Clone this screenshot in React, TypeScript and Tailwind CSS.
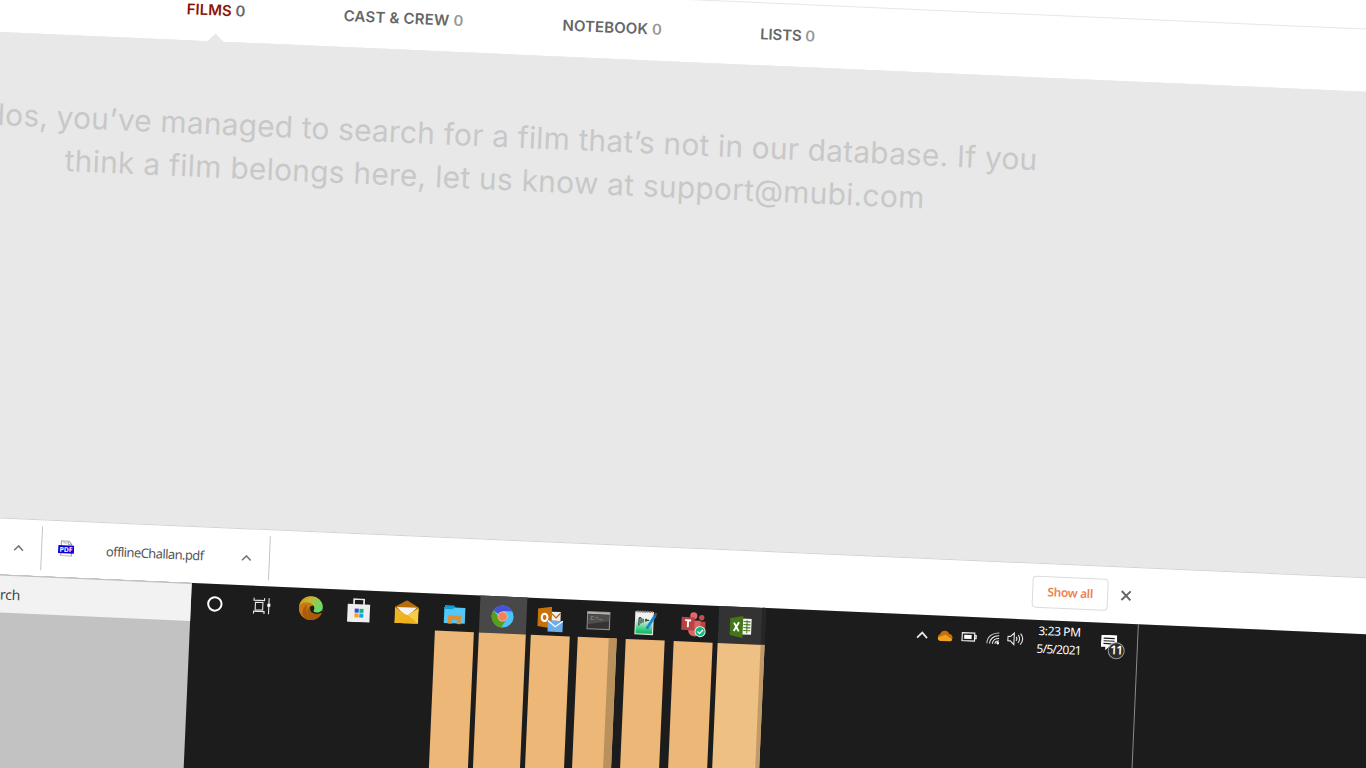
import React from "react";

const tabs = [
  { label: "FILMS", box: "w-[157px]", spacing: "tracking-[0px]", active: true },
  { label: "CAST & CREW", box: "w-[219px]", spacing: "tracking-[0.2px]", active: false },
  { label: "NOTEBOOK", box: "w-[198px]", spacing: "tracking-[0.1px]", active: false },
  { label: "LISTS", box: "w-[100px]", spacing: "tracking-[-0.15px]", active: false },
];

function Caret({ className, color }: { className: string; color: string }) {
  return (
    <svg viewBox="0 0 12 8" className={className} fill="none" stroke={color}>
      <path d="M1 7 6 1.8 11 7" strokeWidth="1.8" />
    </svg>
  );
}

const Cortana = () => (
  <svg viewBox="0 0 24 24" className="size-6" fill="none">
    <circle cx="12" cy="12" r="6.7" stroke="#fff" strokeWidth="2" />
  </svg>
);

const TaskView = () => (
  <svg viewBox="0 0 24 24" className="size-6" fill="none" stroke="#e8e8e8" strokeWidth="1.1">
    <path d="M3 4v2.500h10.500V4M4.500 8.500h7.500v7.500H4.500zM3 20v-2.500h10.500V20M18 4v16" />
    <path d="M16.500 9.500h3v3h-3z" fill="#fff" stroke="none" />
  </svg>
);

const Edge = () => (
  <svg viewBox="0 0 24 24" className="size-6">
    <defs>
      <linearGradient id="edgeTop" x1="0" y1="0" x2="1" y2="0.6">
        <stop offset="0" stopColor="#e08a1c" />
        <stop offset="0.45" stopColor="#b9bd35" />
        <stop offset="1" stopColor="#5ee070" />
      </linearGradient>
    </defs>
    <circle cx="12" cy="12" r="12" fill="#c97912" />
    <path d="M8.500 9C6 14 9 21 15 21c3 0 5-1 7.500-3-2.500 4-6 6-10.500 6C6 24 3 19 4 15c.5-3 2-5 4.500-6Z" fill="#a85c08" />
    <path d="M11.500 10.500c-2 2.500-1.500 5.500.5 7 3 2 7.500 1.500 11.500-1.500V12l-9-3Z" fill="#1c1c1c" />
    <path d="M15 21.500c-4.500 0-7.500-5-6-9l2.500-.5c-.8 4.500 4.500 7 11.500 4.500-2 3.500-4.500 5-8 5Z" fill="#a85c08" />
    <path d="M0.500 10C2 3 7 0 12 0c7 0 12 5 12 10.500 0 4-3 5.500-6 5.500-2.500 0-3.500-1-3-2 .8-1 .8-2.500 0-4C12 5 4 5 .5 10Z" fill="url(#edgeTop)" />
  </svg>
);

const Store = () => (
  <svg viewBox="0 0 24 24" className="size-6">
    <path d="M7 8V1h10v7" fill="none" stroke="#e9e9e9" strokeWidth="1.700" />
    <path d="M.8 6h22.400v18H.8z" fill="#eeeeee" />
    <path d="M8 10.500h4v4H8z" fill="#254fe2" />
    <path d="M12.800 10.500h4v4h-4z" fill="#12b77c" />
    <path d="M8 15.300h4v4H8z" fill="#f6a408" />
    <path d="M12.800 15.300h4v4h-4z" fill="#15a3ef" />
  </svg>
);

const Mail = () => (
  <svg viewBox="0 0 24 24" className="size-6">
    <path d="M0 7 12 0l12 7v5H0z" fill="#b96c0a" />
    <path d="M2 7h20l-9 9h-2z" fill="#f3f3f3" />
    <path d="M0 7.500 12 15v8H0z" fill="#efb526" />
    <path d="M24 7.500V23H0z" fill="#f8cc45" />
    <path d="M0 23 10.500 14l3 .8L24 23z" fill="#eeb221" />
  </svg>
);

const Explorer = () => (
  <svg viewBox="0 0 24 24" className="size-6">
    <path d="M2 3h9l2 2h-11z" fill="#0899d8" />
    <path d="M1.500 5H22.500v16h-21z" fill="#53c8f7" />
    <path d="M1.500 5h9v2h-9z" fill="#129fd9" />
    <path d="M5.500 13h13v8.500h-4v-4h-5v4h-4z" fill="#dd9137" />
  </svg>
);

const Chrome = () => (
  <svg viewBox="0 0 24 24" className="size-6">
    <circle cx="12" cy="12" r="11" fill="#4cc4fa" />
    <path d="M12 12 2.500 6.500A11 11 0 0 1 21.500 6.500H12Z" fill="#4851d9" />
    <path d="M2.500 6.500A11 11 0 0 0 11 23l5.200-8.500L12 12H7.500Z" fill="#5b9c19" />
    <circle cx="12" cy="12" r="5" fill="#d8c8c2" />
    <circle cx="12" cy="12" r="4.300" fill="#fa8053" />
  </svg>
);

const Outlook = () => (
  <svg viewBox="0 0 26 26" className="relative top-px size-[26px]">
    <path d="M0 2.500 14 0v21.500L0 20z" fill="#c97208" />
    <ellipse cx="7" cy="11" rx="2.900" ry="3.700" fill="none" stroke="#fff" strokeWidth="2" />
    <path d="M14 5h9v9h-9z" fill="#f3eee8" />
    <path d="m14 7 4.500 4L23 6" fill="none" stroke="#b46a15" strokeWidth="1.300" />
    <path d="M10.500 14H25.500v11h-15z" fill="#6baeea" />
    <path d="m10.500 14 7.500 6 7.500-6" fill="none" stroke="#fff" strokeWidth="1.200" />
  </svg>
);

const Terminal = () => (
  <svg viewBox="0 0 24 24" className="size-6">
    <path d="M.8 3.500h22.400v17H.8z" fill="#353333" stroke="#8d8a8a" strokeWidth="1.200" />
    <path d="M1 3.500h22v2H1z" fill="#b4b0b0" />
    <path d="M1.500 6h21v6l-21 4z" fill="#504d4d" />
    <path d="M7 8H4.500v3H7M8.500 8.500v.8m0 1.200v.8M10 8l2 3m1 0h3" fill="none" stroke="#8c8888" strokeWidth=".8" />
  </svg>
);

const Notes = () => (
  <svg viewBox="0 0 24 26" className="h-[26px] w-6">
    <defs>
      <linearGradient id="notesFill" x1="0" y1="0" x2="0" y2="1">
        <stop offset=".3" stopColor="#eef4f0" />
        <stop offset=".9" stopColor="#12c266" />
      </linearGradient>
    </defs>
    <path d="M2 2.500h17.500v22H2z" fill="url(#notesFill)" stroke="#e0e0e0" strokeWidth="1.200" />
    <path d="M3 2h16" stroke="#8b8176" strokeWidth="2" strokeDasharray="1.500 1" />
    <path d="M5.500 16V9c0-1.500 2-1 2 0v5m2-5v4m3-4v3m-1-1.500h4" fill="none" stroke="#30483d" strokeWidth="1.300" />
    <path d="m13.500 19 8-14" stroke="#1686d6" strokeWidth="2.800" />
    <path d="m21 6 1.500-3" stroke="#744d3b" strokeWidth="2.500" />
  </svg>
);

const Teams = () => (
  <svg viewBox="0 0 26 26" className="size-[26px]">
    <circle cx="13" cy="4" r="3.600" fill="#dc6b69" />
    <circle cx="21" cy="5.500" r="2.700" fill="#c44e4d" />
    <path d="M17 9.500h8v7c0 3-2 5-5 5h-3z" fill="#b94646" />
    <path d="M8 8.500h12v10c0 3.500-3 6-6 6s-6-2.500-6-6z" fill="#d96563" />
    <path d="M1 5.500h13v13H1z" fill="#b94344" />
    <path d="M4.500 8.700h6M7.500 8.700v7" fill="none" stroke="#fff" strokeWidth="1.900" />
    <circle cx="20" cy="19.500" r="5.500" fill="#e9fff4" />
    <circle cx="20" cy="19.500" r="4.700" fill="#14b97c" />
    <path d="m17.500 19.500 2 2 3.200-3.700" fill="none" stroke="#fff" strokeWidth="1.300" />
  </svg>
);

const Excel = () => (
  <svg viewBox="0 0 24 24" className="relative left-0.5 size-6">
    <path d="M12 3.500h10v16H12z" fill="#f4f4f4" />
    <path d="M14 6.500h7M14 9.500h7M14 12.500h7M14 15.500h7M17.500 5v13" stroke="#528326" strokeWidth="1.100" />
    <path d="M.5 3.500 13.500 1v22L.5 20.500z" fill="#447519" />
    <path d="m4.500 8 5 8.500M9.500 7.500l-5 9" fill="none" stroke="#fff" strokeWidth="1.900" />
  </svg>
);

const apps = [
  { name: "cortana", Icon: Cortana, slot: "w-12", strip: "", bar: "" },
  { name: "task-view", Icon: TaskView, slot: "w-12", strip: "", bar: "" },
  { name: "edge", Icon: Edge, slot: "w-12", strip: "", bar: "" },
  { name: "store", Icon: Store, slot: "w-12", strip: "", bar: "" },
  { name: "mail", Icon: Mail, slot: "w-12", strip: "", bar: "" },
  { name: "explorer", Icon: Explorer, slot: "w-12", strip: "", bar: "w-[39px] bg-[#edb877]" },
  { name: "chrome", Icon: Chrome, slot: "w-12", strip: "bg-[#484848] w-[47px]", bar: "w-[47px] bg-[#edb877]" },
  { name: "outlook", Icon: Outlook, slot: "w-12", strip: "", bar: "w-[39px] bg-[#edb877]" },
  { name: "terminal", Icon: Terminal, slot: "w-[47px]", strip: "", bar: "w-[39px] border-r-8 border-[#b8915c] bg-[#edb877]" },
  { name: "notes", Icon: Notes, slot: "w-12", strip: "", bar: "w-[39px] bg-[#edb877]" },
  { name: "teams", Icon: Teams, slot: "w-12", strip: "", bar: "w-[39px] bg-[#edb877]" },
  { name: "excel", Icon: Excel, slot: "w-12", strip: "bg-[#333333] w-[47px] border-r-4 border-[#262626]", bar: "w-[47px] border-r-4 border-[#c09a68] bg-[#eec083]" },
];

function SiteHeader() {
  return (
    <header className="h-[92px] shrink-0 bg-white">
      <div className="h-[30px] border-b border-[#e6e6e6]" />
      <nav className="flex h-[62px] items-center pl-[187px] font-['Inter',sans-serif] text-[15px] font-semibold whitespace-nowrap text-[#666]">
        {tabs.map((t) => (
          <div key={t.label} className={`relative flex h-full items-center ${t.box} ${t.spacing}`}>
            <span>
              <span className={t.active ? "text-[#8c1407]" : ""}>{t.label}</span>{" "}
              <span className={t.active ? "text-[#666]" : "text-[#999]"}>0</span>
            </span>
            {t.active && (
              <span className="absolute bottom-0 left-[21.5px] border-x-8 border-b-8 border-x-transparent border-b-[#e8e8e8]" />
            )}
          </div>
        ))}
      </nav>
    </header>
  );
}

function DownloadBar() {
  return (
    <section className="flex h-[57px] shrink-0 items-center border-t border-[#d6d2d2] bg-white font-['Noto_Sans',sans-serif]">
      <div className="flex h-[44px] w-[66px] items-center border-r border-[#c4c4c4] pl-[37px]">
        <Caret className="h-[7px] w-[11px]" color="#777" />
      </div>
      <div className="flex h-[44px] w-[228px] items-center border-r border-[#c4c4c4] pl-4">
        <svg viewBox="0 0 16 16" className="mb-0.5 size-4 shrink-0">
          <path d="M3 .5h7.500L13.500 4v11.500H3z" fill="#fff" stroke="#999" />
          <path d="M5 2.500h4M10 .5V4h3.500" stroke="#999" fill="none" strokeWidth=".8" />
          <path d="M0 5h16v8H0z" fill="#1000d8" />
          <text x="8" y="11.600" textAnchor="middle" fill="#fff" fontSize="6.800" fontWeight="700" fontFamily="Noto Sans">PDF</text>
        </svg>
        <span className="ml-[32px] w-[98px] pt-[2px] text-[13px] tracking-[-0.6px] whitespace-nowrap text-[#555]">offlineChallan.pdf</span>
        <Caret className="ml-[37px] h-[7px] w-[11px]" color="#777" />
      </div>
      <div className="ml-[763px] flex h-[32px] w-[76px] items-center justify-center rounded border border-[#dedada] text-[12px] font-semibold tracking-[-0.35px] whitespace-nowrap text-[#ef8050]">
        Show all
      </div>
      <svg viewBox="0 0 12 12" className="ml-3 size-3" fill="none" stroke="#666" strokeWidth="2">
        <path d="m1.500 1.500 9 9m0-9-9 9" />
      </svg>
    </section>
  );
}

function Tray() {
  return (
    <div className="ml-[151px] flex h-[39px] items-center font-['Noto_Sans',sans-serif] text-white">
      <Caret className="h-[8px] w-[12px]" color="#e8e8e8" />
      <svg viewBox="0 0 16 12" className="ml-[9px] h-3 w-4">
        <path d="M3.500 11A3.500 3.500 0 0 1 3 4.300 4.800 4.800 0 0 1 12 4a3.600 3.600 0 0 1 1 7z" fill="#c86f06" />
        <path d="M3.500 11.300c-2 0-3.300-1.800-2.500-3.500L8.500 5l6.500 4c0 1.500-1 2.300-2.500 2.300z" fill="#eda022" />
      </svg>
      <svg viewBox="0 0 16 10" className="ml-[8px] h-[10px] w-4">
        <path d="M1 1h12.500v8H1zM13.500 3.500H15v3h-1.500" fill="none" stroke="#f0f0f0" strokeWidth="1.200" />
        <path d="M3 3h7.500v4H3z" fill="#fff" />
      </svg>
      <svg viewBox="0 0 14 14" className="mt-px ml-[9px] size-[14px]" fill="none" stroke="#bbb" strokeWidth="1.100">
        <path d="M1 12.500C1 6 6 1.800 13 1.800" />
        <path d="M3.700 12.800c0-5 4-8.200 9.300-8.200M6.500 12.800c0-3.500 3-5.500 6.500-5.500M9 12.800c0-2 1.600-3 4-3" stroke="#eee" />
        <circle cx="11.800" cy="12" r="1.300" fill="#fff" stroke="none" />
      </svg>
      <svg viewBox="0 0 17 14" className="ml-[7px] h-[14px] w-[17px]" fill="none" stroke="#e8e8e8" strokeWidth="1.100">
        <path d="M.8 4.800h2.500L7 1.200v11.600L3.300 9.200H.8zM9 5q1.500 2 0 4M11 3q3 4 0 8M13.300 1.500q4.500 5.500 0 11" />
      </svg>
      <div className="ml-[9px] w-[52px] text-center text-[12px] leading-[17.500px] whitespace-nowrap">
        <div className="tracking-[-0.4px]">3:23 PM</div>
        <div className="tracking-[-0.7px]">5/5/2021</div>
      </div>
      <div className="relative ml-[16px] h-4 w-4">
        <svg viewBox="0 0 16 16" className="size-4">
          <path d="M0 0h16v12H8l-3.500 3.500V12H0z" fill="#fff" />
          <path d="M2.500 3.300h11M2.500 6h11M2.500 8.700h8" stroke="#1c1c1c" strokeWidth="1.200" />
        </svg>
        <span className="absolute top-[7px] left-[7px] flex size-[17px] items-center justify-center rounded-full border border-[#999] bg-[#2b2b2b] text-[12px] leading-none font-semibold tracking-[-0.9px]">11</span>
      </div>
    </div>
  );
}

export default function App() {
  return (
    <div className="h-screen w-screen overflow-hidden bg-white">
      <div className="-mt-[60px] flex h-[904px] w-[1410px] origin-[0_60px] rotate-[2.500deg] flex-col bg-[#e8e8e8]">
        <SiteHeader />
        <main className="h-[485px] shrink-0 bg-[#e8e8e8] pt-[61px]">
          <div className="ml-[-48px] flex w-[1100px] flex-col items-center font-['Inter',sans-serif] text-[30px] leading-[43px] whitespace-nowrap text-[#c8c8c8]">
            <p className="mr-[6px] tracking-[0.140px]">Kudos, you’ve managed to search for a film that’s not in our database. If you</p>
            <p className="tracking-[0.210px]">think a film belongs here, let us know at support@mubi.com</p>
          </div>
        </main>
        <DownloadBar />
        <footer className="flex h-[270px] shrink-0 bg-[#1c1c1c]">
          <div className="flex w-[217px] shrink-0 flex-col bg-[#c2c2c2]">
            <div className="flex h-[38px] items-center border-t border-[#bdbdbd] bg-[#f2f2f2] font-['Noto_Sans',sans-serif] text-[14px] tracking-[-0.3px] text-[#444]">
              <span className="w-[46px] text-right">search</span>
            </div>
          </div>
          <div className="flex shrink-0">
            {apps.map(({ name, Icon, slot, strip, bar }) => (
              <div key={name} className={`flex shrink-0 flex-col items-center ${slot}`}>
                <div className={`flex h-[37px] shrink-0 items-center justify-center pt-0.5 ${strip}`}>
                  <Icon />
                </div>
                <div className={`flex-1 ${bar}`} />
              </div>
            ))}
          </div>
          <Tray />
          <div className="ml-[20px] w-px bg-[#8a8a8a]" />
        </footer>
      </div>
    </div>
  );
}
